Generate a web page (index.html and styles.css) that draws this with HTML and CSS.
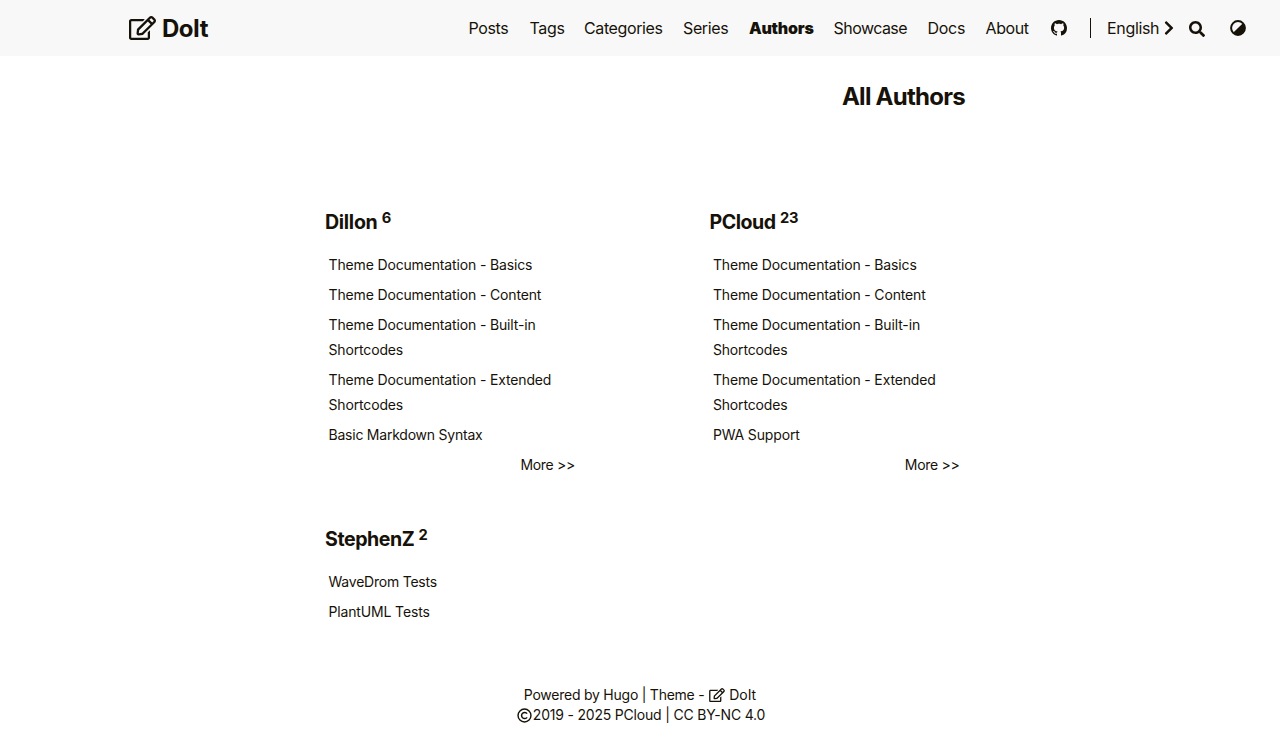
FILE: index.html
```html
<!DOCTYPE html>
<html lang="en">
<head>
<meta charset="utf-8">
<title>All Authors - DoIt</title>
<link rel="stylesheet" href="styles.css">
</head>
<body>
<svg class="sprite" width="0" height="0">
  <symbol id="edit" viewBox="0 0 576 512"><path d="M402.3 344.9l32-32c5-5 13.7-1.5 13.7 5.7V464c0 26.5-21.5 48-48 48H48c-26.5 0-48-21.5-48-48V112c0-26.5 21.5-48 48-48h273.5c7.1 0 10.7 8.6 5.7 13.7l-32 32c-1.5 1.5-3.5 2.3-5.7 2.3H48v352h352V350.5c0-2.1.8-4.1 2.3-5.6zm156.6-201.8L296.3 405.7l-90.4 10c-26.2 2.9-48.5-19.2-45.6-45.6l10-90.4L432.9 17.1c22.9-22.9 59.9-22.9 82.7 0l43.2 43.2c22.9 22.9 22.9 60 .1 82.8zM460.1 174L402 115.9 216.2 301.8l-7.3 65.3 65.3-7.3L460.1 174zm64.8-79.7l-43.2-43.2c-4.1-4.1-10.8-4.1-14.8 0L436 82l58.1 58.1 30.9-30.9c4-4.2 4-10.8-.1-14.9z"/></symbol>
</svg>
<header class="header">
  <a class="brand"><svg class="brand-icon"><use href="#edit"/></svg><span>DoIt</span></a>
  <nav class="menu">
    <a class="posts">Posts</a>
    <a class="tags">Tags</a>
    <a class="categories">Categories</a>
    <a class="series">Series</a>
    <a class="authors active">Authors</a>
    <a class="showcase">Showcase</a>
    <a class="docs">Docs</a>
    <a class="about">About</a>
    <svg class="icon github" viewBox="0 0 16 16"><path d="M8 0C3.58 0 0 3.58 0 8c0 3.54 2.29 6.53 5.47 7.59.4.07.55-.17.55-.38 0-.19-.01-.82-.01-1.49-2.01.37-2.53-.49-2.69-.94-.09-.23-.48-.94-.82-1.13-.28-.15-.68-.52-.01-.53.63-.01 1.08.58 1.23.82.72 1.21 1.87.87 2.33.66.07-.52.28-.87.51-1.07-1.78-.2-3.64-.89-3.64-3.95 0-.87.31-1.59.82-2.15-.08-.2-.36-1.02.08-2.12 0 0 .67-.21 2.2.82.64-.18 1.32-.27 2-.27.68 0 1.36.09 2 .27 1.53-1.04 2.2-.82 2.2-.82.44 1.1.16 1.92.08 2.12.51.56.82 1.27.82 2.15 0 3.07-1.87 3.75-3.65 3.95.29.25.54.73.54 1.48 0 1.07-.01 1.93-.01 2.2 0 .21.15.46.55.38A8.012 8.012 0 0 0 16 8c0-4.42-3.58-8-8-8z"/></svg>
    <span class="divider"></span>
    <a class="language">English</a>
    <svg class="chevron" viewBox="0 0 320 512"><path d="M285.476 272.971L91.132 467.314c-9.373 9.373-24.569 9.373-33.941 0l-22.667-22.667c-9.357-9.357-9.375-24.522-.04-33.901L188.505 256 34.484 101.255c-9.335-9.379-9.317-24.544.04-33.901l22.667-22.667c9.373-9.373 24.569-9.373 33.941 0L285.475 239.03c9.373 9.372 9.373 24.568.001 33.941z"/></svg>
    <svg class="icon search" viewBox="0 0 512 512"><path d="M505 442.7L405.3 343c-4.5-4.5-10.6-7-17-7H372c27.6-35.3 44-79.7 44-128C416 93.1 322.9 0 208 0S0 93.1 0 208s93.1 208 208 208c48.3 0 92.7-16.4 128-44v16.3c0 6.4 2.5 12.5 7 17l99.7 99.7c9.4 9.4 24.6 9.4 33.9 0l28.3-28.3c9.4-9.4 9.4-24.6.1-34zM208 336c-70.7 0-128-57.2-128-128 0-70.7 57.2-128 128-128 70.7 0 128 57.2 128 128 0 70.7-57.2 128-128 128z"/></svg>
    <svg class="icon theme" viewBox="0 0 16 16"><circle cx="8" cy="8" r="6.9" fill="none" stroke="currentColor" stroke-width="2"/><path d="M12.6 3.4A6.5 6.5 0 0 1 3.4 12.6z"/></svg>
  </nav>
</header>
<main class="page">
  <h1 class="title">All Authors</h1>
  <div class="cards">
    <section class="card">
      <h3 class="name dillon">Dillon <sup>6</sup></h3>
      <a class="post">Theme Documentation - Basics</a>
      <a class="post">Theme Documentation - Content</a>
      <a class="post">Theme Documentation - Built-in<br>Shortcodes</a>
      <a class="post">Theme Documentation - Extended<br>Shortcodes</a>
      <a class="post markdown">Basic Markdown Syntax</a>
      <a class="more">More &gt;&gt;</a>
    </section>
    <section class="card">
      <h3 class="name pcloud">PCloud <sup>23</sup></h3>
      <a class="post">Theme Documentation - Basics</a>
      <a class="post">Theme Documentation - Content</a>
      <a class="post">Theme Documentation - Built-in<br>Shortcodes</a>
      <a class="post">Theme Documentation - Extended<br>Shortcodes</a>
      <a class="post">PWA Support</a>
      <a class="more">More &gt;&gt;</a>
    </section>
    <section class="card">
      <h3 class="name stephen">StephenZ <sup>2</sup></h3>
      <a class="post tests">WaveDrom Tests</a>
      <a class="post">PlantUML Tests</a>
    </section>
  </div>
</main>
<footer class="footer">
  <div class="line powered"><span class="credit">Powered by Hugo | Theme - </span><svg class="foot-icon"><use href="#edit"/></svg><span class="theme-name">DoIt</span></div>
  <div class="line rights"><svg class="copy" viewBox="0 0 16 16" fill="none" stroke="currentColor"><circle cx="8" cy="8" r="6.9" stroke-width="1.5"/><path d="M10.8 10A3.3 3.3 0 1 1 10.8 6" stroke-width="1.6"/></svg><span>2019 - 2025 PCloud | CC BY-NC 4.0</span></div>
</footer>
</body>
</html>
```
FILE: styles.css
```css
* { box-sizing: border-box; }
body {
  margin: 0;
  height: 741px;
  background: #fff;
  color: #161209;
  font: 14px/25px Inter, "Liberation Sans", sans-serif;
  overflow: hidden;
}
svg { fill: currentColor; flex: none; }
svg[fill="none"] { fill: none; }
.sprite { display: block; }
.header {
  display: flex;
  height: 56px;
  padding: 0 0 0 129px;
  background: #f8f8f8;
  align-items: center;
  white-space: nowrap;
}
.brand { display: flex; align-items: center; gap: 6px; width: 339.5px; font-size: 24px; font-weight: 700; letter-spacing: -0.5px; }
.brand-icon { width: 27px; height: 24px; }
.menu { display: flex; align-items: center; font-size: 16px; line-height: 56px; letter-spacing: -0.38px; }
.posts { width: 61px; }
.tags { width: 54.5px; letter-spacing: -0.3px; }
.categories { width: 99px; }
.series { width: 66px; }
.authors { width: 84.5px; }
.showcase { width: 94px; letter-spacing: -0.55px; }
.docs { width: 58px; letter-spacing: -0.3px; }
.about { width: 65.5px; }
.active { font-weight: 900; letter-spacing: -0.25px; }
.icon { width: 16px; height: 16px; }
.divider { width: 1px; height: 20px; margin: 0 16px 0 23px; background: #161209; }
.language { width: 57px; letter-spacing: -0.33px; }
.chevron { width: 10px; height: 16px; margin-right: 15px; }
.search { margin-right: 25px; position: relative; top: 1px; }
.page { width: 640px; margin: 0 auto; padding: 0 0 0 5px; }
.title { margin: 24px -5px 0 0; text-align: right; font-size: 24px; line-height: 34px; letter-spacing: -0.74px; }
.cards { display: grid; grid-template-columns: 250px 250px; column-gap: 134.4px; row-gap: 46px; margin-top: 92px; }
.name { margin: 0 0 14px; font-size: 19.6px; line-height: 32px; letter-spacing: -0.3px; white-space: nowrap; }
.pcloud, .stephen { letter-spacing: -0.45px; }
.name sup { font-size: 14.7px; line-height: 0; letter-spacing: -0.1px; vertical-align: 5.6px; }
.post { display: block; margin: 0 0 5px 3.5px; white-space: nowrap; letter-spacing: -0.15px; }
.markdown, .tests { letter-spacing: -0.23px; }
.more { display: block; text-align: right; letter-spacing: -0.3px; }
.footer { margin-top: 56px; text-align: center; line-height: 20px; }
.line { display: flex; justify-content: center; align-items: center; white-space: pre; }
.credit { letter-spacing: -0.24px; }
.theme-name { margin-left: 4.5px; }
.foot-icon { width: 16px; height: 14px; margin-left: 0.5px; }
.rights { letter-spacing: -0.2px; padding-left: 2px; }
.copy { width: 15px; height: 15px; margin-right: 1px; }
```
